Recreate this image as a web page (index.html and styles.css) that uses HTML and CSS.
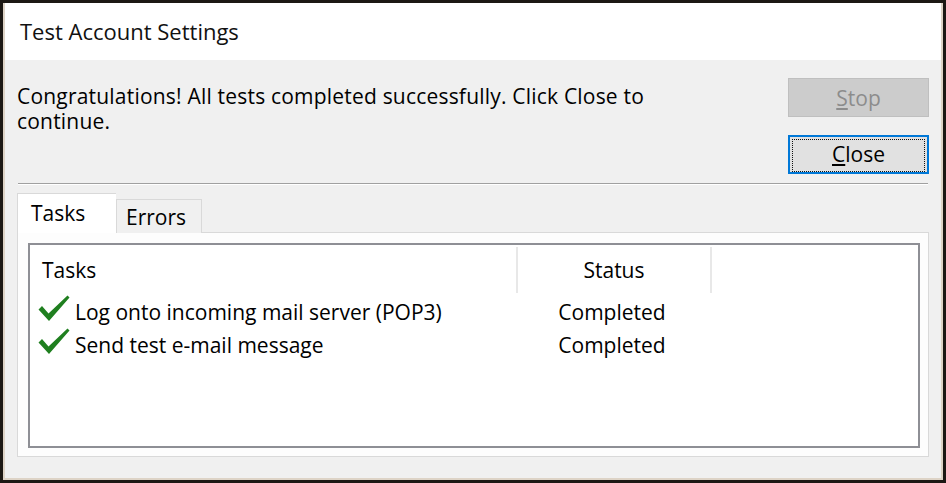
FILE: index.html
```html
<!DOCTYPE html>
<html lang="en">
  <head>
    <meta charset="UTF-8" />
    <title>Test Account Settings</title>
    <link rel="stylesheet" href="styles.css">
  </head>
  <body>
    <div class="window">
      <!-- Title bar -->
      <div class="titlebar">Test Account Settings</div>

      <div class="content">
        <!-- Message + buttons -->
        <div class="top-row">
          <p class="message">Congratulations! All tests completed successfully. Click Close to continue.</p>
          <div class="buttons">
            <button class="btn btn-disabled" disabled><u>S</u>top</button>
            <button class="btn btn-default"><span class="focus"><u>C</u>lose</span></button>
          </div>
        </div>

        <div class="separator"></div>

        <!-- Tabs -->
        <div class="tabs">
          <div class="tab active">Tasks</div>
          <div class="tab">Errors</div>
        </div>

        <div class="tab-panel">
          <div class="listview">
            <div class="list-header">
              <div class="col-task">Tasks</div>
              <div class="col-status">Status</div>
              <div class="col-rest"></div>
            </div>

            <div class="list-row">
              <div class="col-task">
                <svg class="check" viewBox="0 0 32 27" width="32" height="27">
                  <path d="M0.5 14.5 L4 11 L10.5 18.5 L29.5 0.5 L31.5 2.5 L11 26 Z" fill="#1f7f1f"/>
                </svg>
                Log onto incoming mail server (POP3)
              </div>
              <div class="col-status">Completed</div>
            </div>

            <div class="list-row">
              <div class="col-task">
                <svg class="check" viewBox="0 0 32 27" width="32" height="27">
                  <path d="M0.5 14.5 L4 11 L10.5 18.5 L29.5 0.5 L31.5 2.5 L11 26 Z" fill="#1f7f1f"/>
                </svg>
                Send test e-mail message
              </div>
              <div class="col-status">Completed</div>
            </div>
          </div>
        </div>
      </div>
    </div>
  </body>
</html>
```

FILE: styles.css
```css
/* Basic page */
body {
  margin: 0;
  background: #1c1814;
  font-family: "Open Sans", "Noto Sans", sans-serif;
  color: #000;
}

/* Dialog frame */
.window {
  width: 940px;
  height: 477px;
  border: 3px solid #1c1814;
  box-shadow: inset 0 0 0 2px #ddd3c6;
  background: #f0f0f0;
  display: flex;
  flex-direction: column;
}

.titlebar {
  height: 57px;
  margin: 0 2px;
  background: #ffffff;
  font-size: 22px;
  line-height: 57px;
  padding-left: 15px;
  color: #111;
}

.content {
  flex: 1;
  padding: 18px 12px 0 12px;
}

/* Message row */
.top-row {
  display: flex;
  justify-content: space-between;
}

.message {
  margin: 6px 0 0 2px;
  width: 660px;
  font-size: 21px;
  line-height: 25px;
  letter-spacing: 0.2px;
}

.buttons {
  display: flex;
  flex-direction: column;
  gap: 18px;
  width: 141px;
  margin-right: 2px;
}

.btn {
  height: 39px;
  font-family: inherit;
  font-size: 21px;
  padding: 0;
}

.btn-disabled {
  background: #cccccc;
  border: 1px solid #bfbfbf;
  color: #8c8c8c;
}

.btn-default {
  background: #e1e1e1;
  border: 2px solid #0078d7;
  color: #000;
  padding: 2px;
}

.btn-default .focus {
  display: block;
  height: 100%;
  border: 1px dotted #111;
  line-height: 29px;
}

.separator {
  height: 1px;
  margin: 9px 3px 0 3px;
  background: #a0a0a0;
  border-bottom: 1px solid #ffffff;
}

/* Tabs */
.tabs {
  display: flex;
  align-items: flex-end;
  margin: 8px 0 0 2px;
  height: 40px;
  position: relative;
  z-index: 1;
}

.tab {
  font-size: 21px;
  border: 1px solid #d9d9d9;
  border-bottom: none;
  background: #f0f0f0;
  height: 34px;
  width: 86px;
  padding: 0 0 0 9px;
  line-height: 35px;
  box-sizing: border-box;
}

.tab.active {
  background: #ffffff;
  height: 40px;
  width: 99px;
  padding: 0 0 0 13px;
  line-height: 38px;
  border-right: none;
}

.tab-panel {
  margin: -1px 2px 0 2px;
  height: 213px;
  background: #fdfdfd;
  border: 1px solid #d9d9d9;
  padding: 10px 8px 0 10px;
}

/* List view */
.listview {
  height: 201px;
  border: 2px solid #8e8f95;
  background: #ffffff;
}

.list-header,
.list-row {
  display: flex;
  font-size: 21px;
}

.list-header {
  height: 46px;
  align-items: stretch;
  margin-top: 2px;
  margin-bottom: 2px;
}

.list-header > div {
  display: flex;
  align-items: center;
  border-right: 2px solid #e8e8e8;
}

.list-header .col-task {
  padding-left: 12px;
}

.list-header .col-rest {
  border-right: none;
}

.col-task {
  width: 474px;
  padding-left: 12px;
}

.col-status {
  width: 192px;
  justify-content: center;
  text-align: center;
}

.list-row {
  height: 33px;
  align-items: center;
}

.list-row .col-task {
  display: flex;
  align-items: center;
  gap: 5px;
  padding-left: 8px;
  width: 478px;
}

.check {
  margin-top: -6px;
  flex: none;
}
```
